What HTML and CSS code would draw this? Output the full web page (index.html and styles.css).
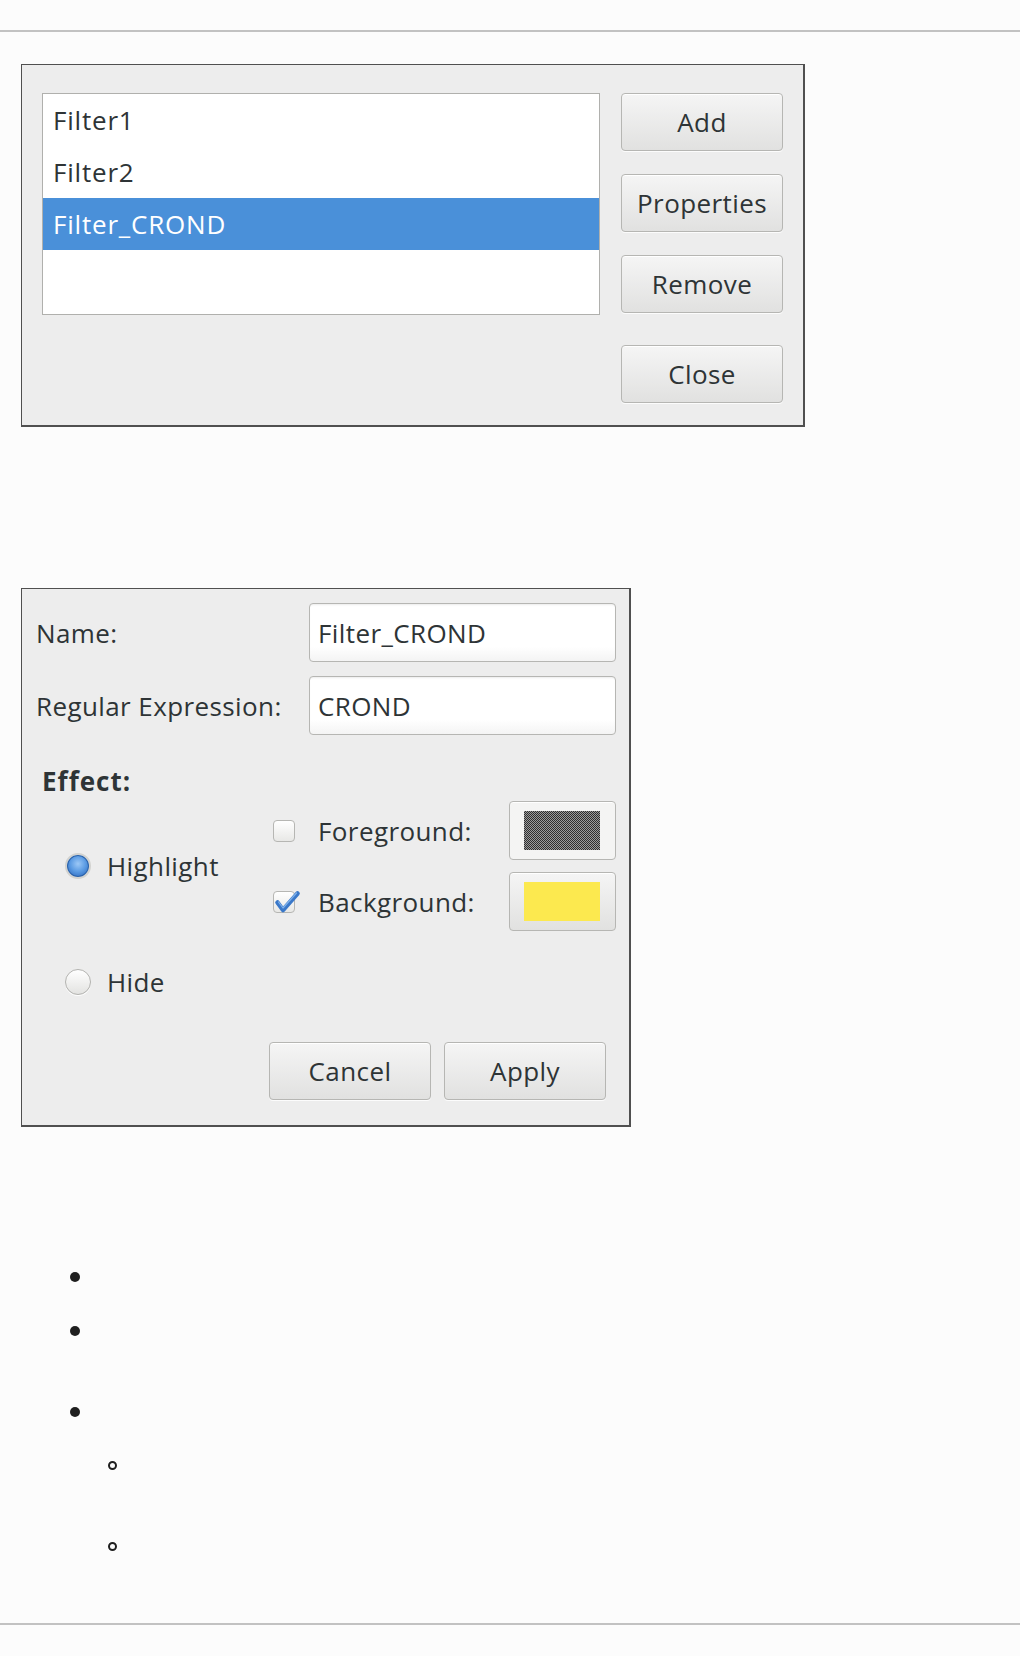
FILE: index.html
```html
<!DOCTYPE html>
<html lang="en">
<head>
    <meta charset="UTF-8">
    <meta name="viewport" content="width=device-width, initial-scale=1.0">
    <title>Log Filters</title>
    <link rel="stylesheet" href="styles.css">
</head>
<body>
    <hr class="rule rule-top">
    <div class="page">
        <div class="dialog filters">
            <div class="filter-list">
                <div class="filter-item">Filter1</div>
                <div class="filter-item">Filter2</div>
                <div class="filter-item selected">Filter_CROND</div>
            </div>
            <div class="side-buttons">
                <button class="btn">Add</button>
                <button class="btn">Properties</button>
                <button class="btn">Remove</button>
                <button class="btn close">Close</button>
            </div>
        </div>

        <div class="dialog props">
            <div class="form-grid">
                <label>Name:</label>
                <input class="entry" type="text" value="Filter_CROND">
                <label>Regular Expression:</label>
                <input class="entry" type="text" value="CROND">
            </div>

            <div class="effect-title">Effect:</div>

            <div class="effect-grid">
                <div class="option highlight">
                    <span class="radio on"></span>
                    <span>Highlight</span>
                </div>
                <div class="option fg">
                    <span class="check"></span>
                    <span>Foreground:</span>
                </div>
                <div class="color-btn flat fg-btn"><span class="swatch dither"></span></div>
                <div class="option bg">
                    <span class="check">
                        <svg viewBox="0 0 22 22" width="22" height="22">
                            <path d="M4.5 11.5 L10 19 L24.5 2.5" fill="none" stroke="#3a78c9" stroke-width="4.6" stroke-linecap="round" stroke-linejoin="round"/>
                            <path d="M5.5 11 L10 17 L23.5 2" fill="none" stroke="#7fb1ea" stroke-width="1.2" stroke-linecap="round" stroke-linejoin="round"/>
                        </svg>
                    </span>
                    <span>Background:</span>
                </div>
                <div class="color-btn bg-btn"><span class="swatch yellow"></span></div>
                <div class="option hide">
                    <span class="radio"></span>
                    <span>Hide</span>
                </div>
            </div>

            <div class="actions">
                <button class="btn">Cancel</button>
                <button class="btn">Apply</button>
            </div>
        </div>

        <ul class="bullets">
            <li class="item"><span class="mark"></span></li>
            <li class="item long"><span class="mark"></span></li>
            <li class="item">
                <span class="mark"></span>
                <ul class="sub">
                    <li class="item long"><span class="mark"></span></li>
                    <li class="item"><span class="mark"></span></li>
                </ul>
            </li>
        </ul>
    </div>
    <hr class="rule rule-bottom">
</body>
</html>
```

FILE: styles.css
```css
body {
    margin: 0;
    background: #fcfcfc;
    font-family: "Open Sans", "DejaVu Sans", sans-serif;
    color: #2e3436;
}
.rule {
    border: 0;
    height: 2px;
    background: #c2c2c2;
    margin: 0;
}
.rule-top {
    margin-top: 30px;
}
.rule-bottom {
    margin-top: 63px;
}
.page {
    padding-left: 21px;
}

/* dialog frames */
.dialog {
    box-sizing: border-box;
    background: #ededed;
    border: 1px solid #505050;
    border-right-width: 2px;
    border-bottom-width: 2px;
    font-size: 26px;
    letter-spacing: 0.4px;
}
.btn {
    font: inherit;
    letter-spacing: inherit;
    color: #2e3436;
    height: 58px;
    padding: 0;
    background: linear-gradient(#f5f5f5, #e1e1e0);
    border: 1px solid #b6b6b3;
    border-radius: 4px;
    box-shadow: inset 0 1px #fff, 0 1px rgba(255, 255, 255, 0.8);
}

/* filter list dialog */
.filters {
    width: 784px;
    height: 363px;
    margin-top: 32px;
    padding: 28px 20px 22px 20px;
    display: flex;
    gap: 21px;
}
.filter-list {
    flex: 1;
    height: 222px;
    box-sizing: border-box;
    background: #fff;
    border: 1px solid #b0b0ad;
}
.filter-item {
    height: 52px;
    line-height: 52px;
    padding-left: 10px;
    letter-spacing: 0.8px;
}
.filter-item.selected {
    background: #4a90d9;
    color: #fff;
}
.side-buttons {
    width: 162px;
    display: flex;
    flex-direction: column;
    gap: 23px;
}
.side-buttons .close {
    margin-top: 9px;
}

/* properties dialog */
.props {
    width: 610px;
    margin-top: 161px;
    padding: 14px 13px 25px 14px;
}
.form-grid {
    display: grid;
    grid-template-columns: 273px 1fr;
    row-gap: 14px;
    align-items: center;
}
.entry {
    box-sizing: border-box;
    width: 100%;
    height: 59px;
    font: inherit;
    letter-spacing: inherit;
    color: #2e3436;
    padding: 0 8px;
    border: 1px solid #b6b6b3;
    border-radius: 4px;
    background: linear-gradient(#fff 75%, #f4f4f4);
    box-shadow: inset 0 2px 2px -1px rgba(0, 0, 0, 0.08);
}
.effect-title {
    font-weight: bold;
    height: 30px;
    line-height: 30px;
    margin: 31px 0 0 6px;
    letter-spacing: 1px;
}
.effect-grid {
    display: grid;
    grid-template-columns: 236px 237px 107px;
    grid-template-rows: 59px 59px auto;
    row-gap: 12px;
    margin-top: 5px;
}
.option {
    display: flex;
    align-items: center;
}
.highlight {
    grid-row: 1 / 3;
    grid-column: 1;
    padding-left: 29px;
    gap: 16px;
}
.fg, .bg {
    padding-left: 1px;
    gap: 23px;
}
.hide {
    grid-row: 3;
    grid-column: 1;
    height: 30px;
    margin-top: 24px;
    padding-left: 29px;
    gap: 16px;
}
.radio {
    box-sizing: border-box;
    width: 26px;
    height: 26px;
    border-radius: 50%;
    border: 1px solid #b3b3b0;
    background: linear-gradient(#ffffff, #e3e3e1);
    box-shadow: 0 1px rgba(255, 255, 255, 0.9);
}
.radio.on {
    border: 2px solid #d2d2cf;
    background: radial-gradient(circle at 50% 40%, #9cc8f6 0, #5b9be3 45%, #3471c4 80%, #2a5fa8 100%);
    box-shadow: inset 0 0 0 1px #2b61a8;
}
.check {
    position: relative;
    box-sizing: border-box;
    width: 22px;
    height: 22px;
    border: 1px solid #b6b6b3;
    border-radius: 4px;
    background: linear-gradient(#ffffff, #e8e8e6);
}
.check svg {
    position: absolute;
    left: -1px;
    top: -1px;
    overflow: visible;
}
.color-btn {
    box-sizing: border-box;
    display: flex;
    padding: 9px 15px 9px 14px;
    border: 1px solid #b6b6b3;
    border-radius: 4px;
    background: linear-gradient(#f5f5f5, #e1e1e0);
    box-shadow: inset 0 1px #fff;
}
.color-btn.flat {
    background: #f4f4f3;
}
.swatch {
    flex: 1;
}
.swatch.dither {
    background: repeating-conic-gradient(#2e2e2e 0 25%, #9c9c9c 0 50%) 0 0 / 2px 2px;
}
.swatch.yellow {
    background: #fce94f;
}
.actions {
    display: flex;
    justify-content: flex-end;
    gap: 13px;
    padding-right: 10px;
    margin-top: 45px;
}
.actions .btn {
    width: 162px;
}

/* bullet list */
.bullets {
    list-style: none;
    margin: 136px 0 0;
    padding-left: 49px;
}
.item .mark {
    display: flex;
    align-items: center;
    height: 27px;
}
.item .mark::before {
    content: "";
    width: 10px;
    height: 10px;
    border-radius: 50%;
    background: #1f1f1f;
}
.item {
    margin-bottom: 27px;
}
.item.long {
    margin-bottom: 54px;
}
.sub {
    list-style: none;
    margin: 27px 0 0;
    padding-left: 38px;
}
.sub .item .mark::before {
    box-sizing: border-box;
    width: 9px;
    height: 9px;
    background: transparent;
    border: 2px solid #1f1f1f;
}
.sub .item:last-child,
.bullets > .item:last-child {
    margin-bottom: 0;
}
```
